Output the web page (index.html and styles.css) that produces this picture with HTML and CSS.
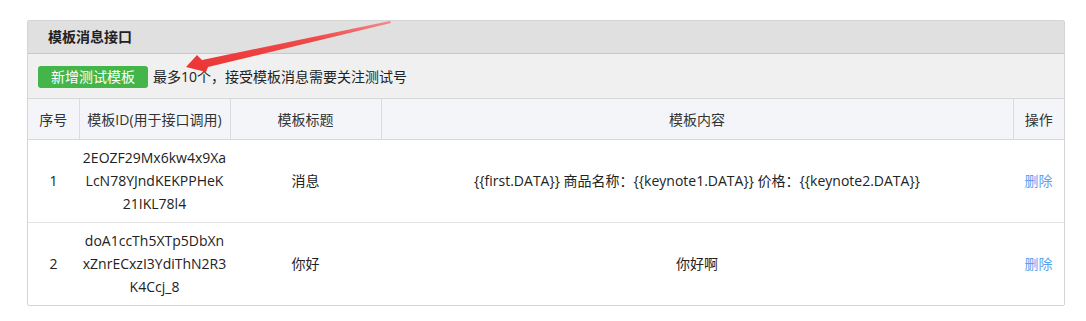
FILE: index.html
```html
<!DOCTYPE html>
<html lang="zh">
<head>
<meta charset="utf-8">
<link rel="stylesheet" href="styles.css">
</head>
<body>
<div class="panel">
  <div class="panel-head">模板消息接口</div>
  <div class="toolbar">
    <button class="btn-add">新增测试模板</button>
    <span class="tip">最多10个，接受模板消息需要关注测试号</span>
  </div>
  <table class="grid">
    <colgroup>
      <col class="c1"><col class="c2"><col class="c3"><col class="c4"><col class="c5">
    </colgroup>
    <thead>
      <tr><th>序号</th><th>模板ID(用于接口调用)</th><th>模板标题</th><th>模板内容</th><th>操作</th></tr>
    </thead>
    <tbody>
      <tr>
        <td>1</td>
        <td class="id">2EOZF29Mx6kw4x9Xa<br>LcN78YJndKEKPPHeK<br>21IKL78l4</td>
        <td>消息</td>
        <td>{{first.DATA}} 商品名称：{{keynote1.DATA}} 价格：{{keynote2.DATA}}</td>
        <td><a class="del">删除</a></td>
      </tr>
      <tr>
        <td>2</td>
        <td class="id">doA1ccTh5XTp5DbXn<br>xZnrECxzI3YdiThN2R3<br>K4Ccj_8</td>
        <td>你好</td>
        <td>你好啊</td>
        <td><a class="del">删除</a></td>
      </tr>
    </tbody>
  </table>
  <svg class="arrow" width="220" height="60" viewBox="0 0 220 60">
    <defs>
      <linearGradient id="ag" x1="1" y1="0" x2="0" y2="1">
        <stop offset="0" stop-color="#f58a8a"/>
        <stop offset="0.35" stop-color="#ef4a4a"/>
        <stop offset="1" stop-color="#ec3434"/>
      </linearGradient>
    </defs>
    <polygon points="212,0 213,2 30,46 28,51 8,46 19,34 24,39" fill="url(#ag)"/>
  </svg>
</div>
</body>
</html>
```
FILE: styles.css
```css
* { box-sizing: border-box; }
body {
  margin: 0;
  background: #fff;
  font-family: "Open Sans", "Noto Sans CJK SC", sans-serif;
  font-size: 14px;
  color: #333;
}
.panel {
  position: relative;
  margin: 20px 0 0 27px;
  width: 1038px;
  border: 1px solid #d4d4d4;
  border-radius: 2px;
}
.panel-head {
  height: 33px;
  line-height: 32px;
  background: #e0e0e0;
  border-bottom: 1px solid #c8c8c8;
  padding-left: 20px;
  font-weight: bold;
  color: #222;
}
.toolbar {
  height: 45px;
  background: #f0f0f0;
  display: flex;
  align-items: center;
  padding-left: 10px;
  gap: 5px;
  border-bottom: 1px solid #d8d8d8;
}
.btn-add {
  height: 22px;
  width: 110px;
  border: none;
  border-radius: 3px;
  background: #44b549;
  color: #fff;
  font-family: inherit;
  font-size: 14px;
  line-height: 22px;
  padding: 0;
  margin-top: 1px;
}
.tip { color: #222; }
.grid {
  width: 100%;
  border-collapse: collapse;
  table-layout: fixed;
}
.c1 { width: 51px; }
.c2 { width: 151px; }
.c3 { width: 151px; }
.c4 { width: auto; }
.c5 { width: 51px; }
.grid th {
  height: 40px;
  background: #f4f5f9;
  font-weight: normal;
  color: #333;
  border-left: 1px solid #dcdcdc;
  border-bottom: 1px solid #d8d8d8;
  padding: 0;
}
.grid th:first-child { border-left: none; }
.grid td {
  height: 83px;
  text-align: center;
  vertical-align: middle;
  border-top: 1px solid #e4e4e4;
  padding: 0;
  color: #222;
  line-height: 23px;
}
.grid tbody tr:first-child td { border-top: none; }
.grid td.id {
  white-space: nowrap;
  padding: 0;
}
.del { color: #5e9ff0; }
.arrow {
  position: absolute;
  left: 150px;
  top: 0;
}
```
